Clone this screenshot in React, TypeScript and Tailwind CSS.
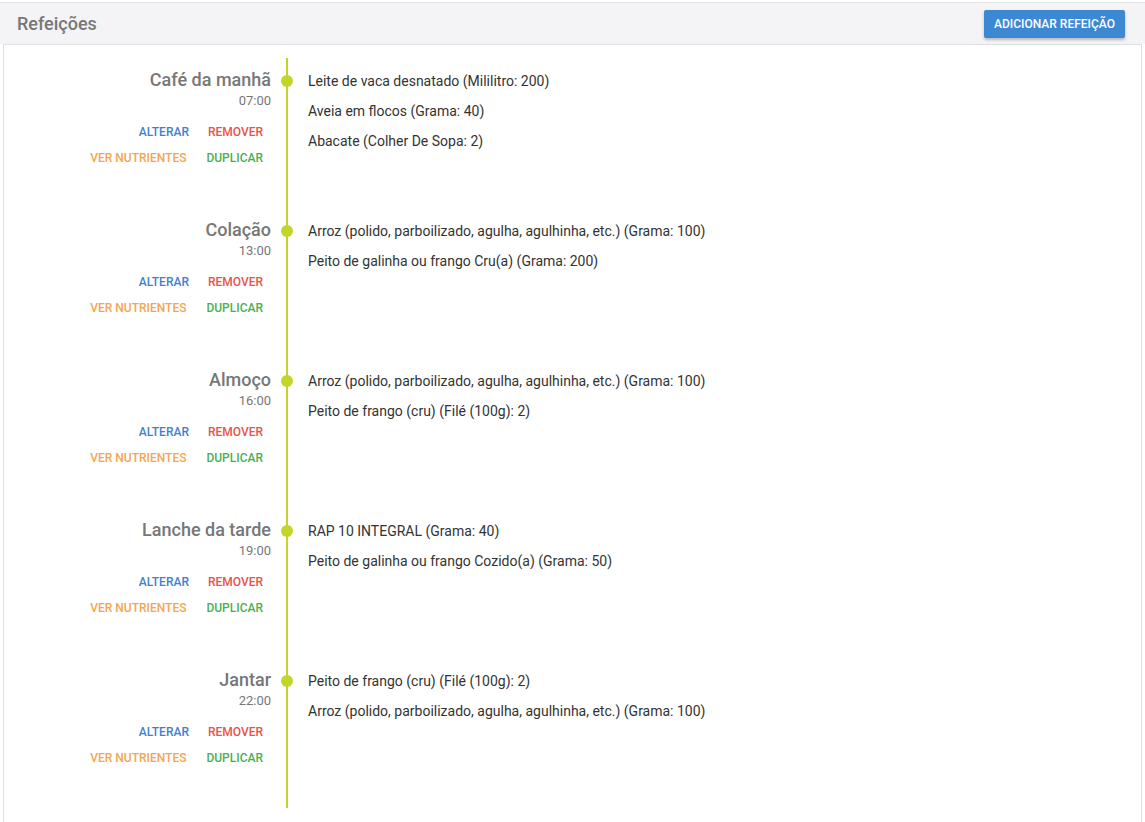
const meals = [
  {
    name: 'Café da manhã',
    time: '07:00',
    foods: ['Leite de vaca desnatado (Mililitro: 200)', 'Aveia em flocos (Grama: 40)', 'Abacate (Colher De Sopa: 2)'],
  },
  {
    name: 'Colação',
    time: '13:00',
    foods: ['Arroz (polido, parboilizado, agulha, agulhinha, etc.) (Grama: 100)', 'Peito de galinha ou frango Cru(a) (Grama: 200)'],
  },
  {
    name: 'Almoço',
    time: '16:00',
    foods: ['Arroz (polido, parboilizado, agulha, agulhinha, etc.) (Grama: 100)', 'Peito de frango (cru) (Filé (100g): 2)'],
  },
  {
    name: 'Lanche da tarde',
    time: '19:00',
    foods: ['RAP 10 INTEGRAL (Grama: 40)', 'Peito de galinha ou frango Cozido(a) (Grama: 50)'],
  },
  {
    name: 'Jantar',
    time: '22:00',
    foods: ['Peito de frango (cru) (Filé (100g): 2)', 'Arroz (polido, parboilizado, agulha, agulhinha, etc.) (Grama: 100)'],
  },
]

function MealRow({ meal }: { meal: (typeof meals)[number] }) {
  return (
    <div className="flex h-[150px]">
      <div className="w-[267px] shrink-0 pt-[12px] text-right">
        <div className="text-[18px] leading-[20px] font-medium text-[#777]">{meal.name}</div>
        <div className="text-[13px] leading-[22px] text-[#777]">{meal.time}</div>
        <div className="mt-[7px] pr-[8px] text-[12px] font-medium">
          <div className="flex h-[26px] items-center justify-end gap-[19px]">
            <button className="text-[#3f7fd3]">ALTERAR</button>
            <button className="text-[#e8534a]">REMOVER</button>
          </div>
          <div className="flex h-[26px] items-center justify-end gap-[20px]">
            <button className="text-[#f6a54f]">VER NUTRIENTES</button>
            <button className="text-[#4caf50]">DUPLICAR</button>
          </div>
        </div>
      </div>
      <div className="relative ml-[15px] w-[2px] shrink-0 bg-[#c4d52a]">
        <span className="absolute left-[-5px] top-[17px] h-3 w-3 rounded-full bg-[#c4d52a]" />
      </div>
      <div className="pl-[20px] pt-[8px]">
        {meal.foods.map((f) => (
          <div key={f} className="text-[14px] leading-[30px] text-[#333]">
            {f}
          </div>
        ))}
      </div>
    </div>
  )
}

export default function App() {
  return (
    <div className="min-h-screen bg-white font-['Roboto',sans-serif]">
      <div className="mt-[2px] flex h-[42px] items-center justify-between border-t border-[#e2e2e2] bg-[#f4f3f6] pl-[17px] pr-[20px]">
        <h1 className="text-[18px] font-medium text-[#777]">Refeições</h1>
        <button className="h-[28px] w-[141px] rounded-[2px] bg-[#3d88d3] text-[12px] font-medium text-white shadow-[0_2px_3px_rgba(0,0,0,0.25)]">
          ADICIONAR REFEIÇÃO
        </button>
      </div>
      <div className="mx-[3px] border-x border-t border-[#e0e0e0] bg-white pb-[14px] pt-[13px]">
        {meals.map((m) => (
          <MealRow key={m.name} meal={m} />
        ))}
      </div>
    </div>
  )
}
